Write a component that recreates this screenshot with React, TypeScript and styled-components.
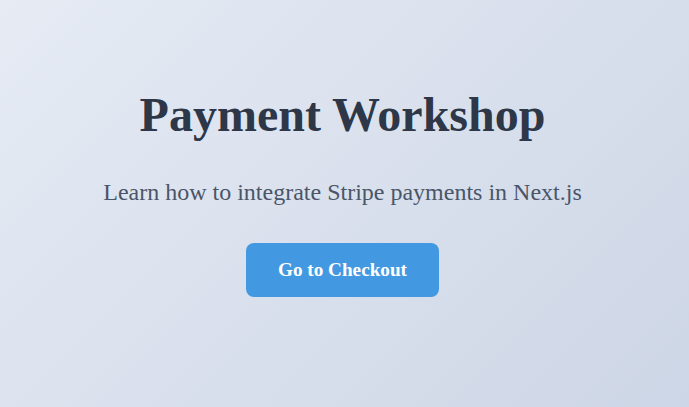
import React from "react";
import styled, { createGlobalStyle } from "styled-components";

const Global = createGlobalStyle`
  html, body { margin: 0; padding: 0; }
  body { font-family: "Liberation Serif", "Times New Roman", serif; }
`;

const Page = styled.main`
  min-height: 407px;
  box-sizing: border-box;
  background: linear-gradient(135deg, #e6ebf4 0%, #cdd6e6 100%);
  display: flex;
  flex-direction: column;
  align-items: center;
  justify-content: center;
  padding: 0 4px 24px 0;
`;

const Title = styled.h1`
  margin: 0 0 34px;
  font-size: 48px;
  font-weight: 700;
  line-height: 1.2;
  color: #2d3748;
`;

const Subtitle = styled.p`
  margin: 0 0 36px;
  font-size: 24px;
  line-height: 1.2;
  color: #4a5568;
`;

const Button = styled.button`
  width: 193px;
  height: 54px;
  border: none;
  border-radius: 8px;
  background: #4299e1;
  color: #ffffff;
  font-family: "Liberation Serif", "Times New Roman", serif;
  font-size: 19.2px;
  font-weight: 700;
  cursor: pointer;
`;

export default function App() {
  return (
    <>
      <Global />
      <Page>
        <Title>Payment Workshop</Title>
        <Subtitle>Learn how to integrate Stripe payments in Next.js</Subtitle>
        <Button>Go to Checkout</Button>
      </Page>
    </>
  );
}
